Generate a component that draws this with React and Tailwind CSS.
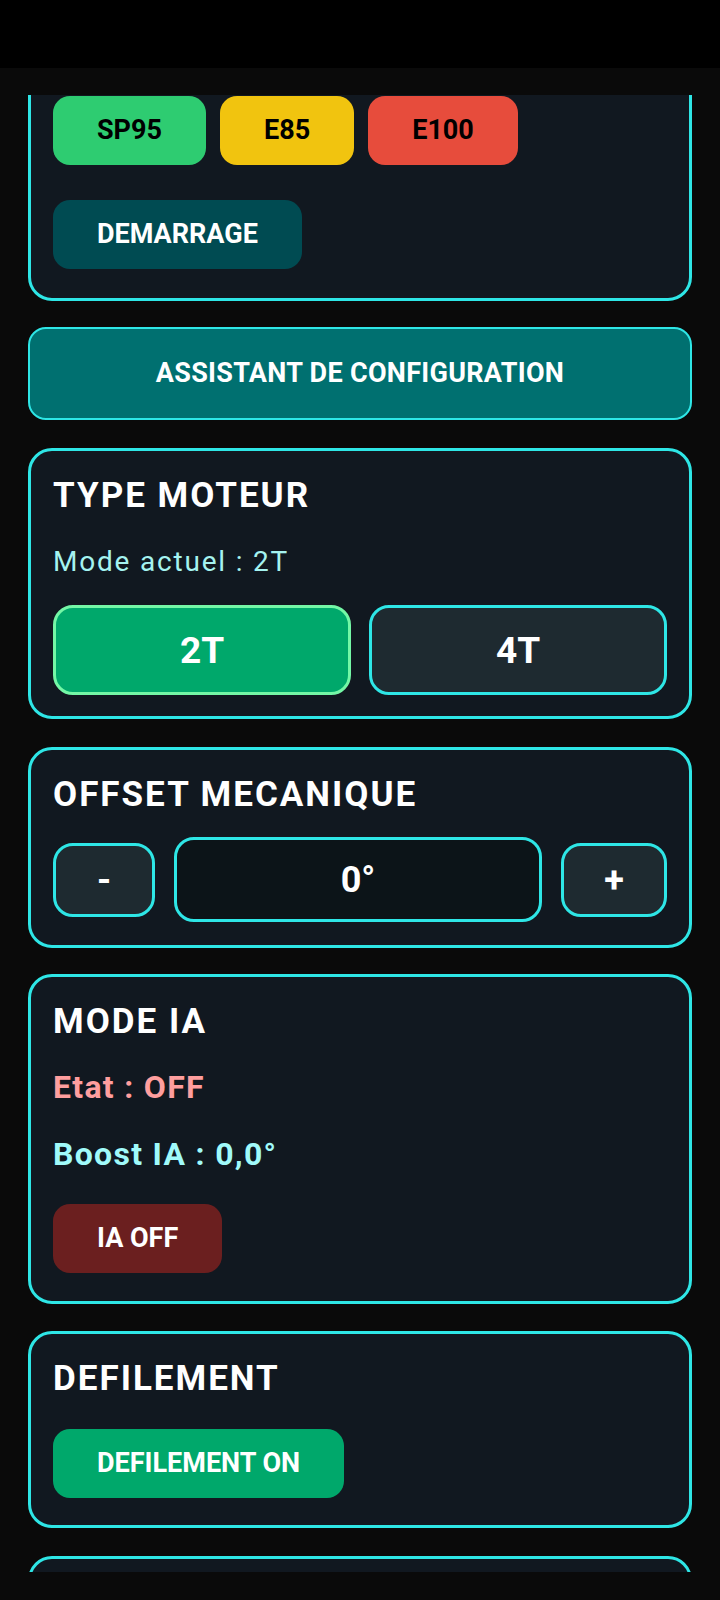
import React from "react";

const card = "rounded-[24px] border-[3px] border-[#2ee6e6] bg-[#111820]";
const smallBtn = "h-[69px] rounded-[17px] px-[44px] text-[27px] font-bold leading-none";

function Title({ children }) {
  return <h2 className="text-[35px] font-bold leading-none tracking-[2px] text-white">{children}</h2>;
}

export default function App() {
  return (
    <div className="flex h-[1600px] w-[720px] flex-col overflow-hidden bg-[#0a0a0a] font-['Roboto','Noto_Sans',sans-serif]">
      <div className="h-[68px] shrink-0 bg-black" />
      <div className="mt-[27px] h-[1477px] shrink-0 overflow-hidden">
        <div className="flex flex-col px-[28px]">
          {/* carburant (scrolled) */}
          <section className={`${card} -mt-[30px] px-[22px] pb-[29px] pt-[28px]`}>
            <div className="flex gap-[14px]">
              <button className={`${smallBtn} bg-[#2ecc71] text-black`}>SP95</button>
              <button className={`${smallBtn} bg-[#f1c40f] text-black`}>E85</button>
              <button className={`${smallBtn} bg-[#e74c3c] text-black`}>E100</button>
            </div>
            <button className={`${smallBtn} mt-[35px] bg-[#004b52] text-white`}>DEMARRAGE</button>
          </section>

          <button className="mt-[26px] h-[93px] rounded-[18px] border-2 border-[#2ee6e6] bg-[#007070] text-[27px] font-bold leading-none tracking-[0.3px] text-white">
            ASSISTANT DE CONFIGURATION
          </button>

          <section className={`${card} mt-[28px] px-[22px] pb-[21px] pt-[27px]`}>
            <Title>TYPE MOTEUR</Title>
            <p className="mt-[35px] text-[28px] leading-none tracking-[1.8px] text-[#a5f3f0]">Mode actuel : 2T</p>
            <div className="mt-[29px] grid grid-cols-2 gap-[18px]">
              <button className="h-[90px] rounded-[20px] border-[3px] border-[#74f7a6] bg-[#00a86b] text-[37px] font-bold leading-none text-white">
                2T
              </button>
              <button className="h-[90px] rounded-[20px] border-[3px] border-[#2ee6e6] bg-[#1e2a30] text-[37px] font-bold leading-none text-white">
                4T
              </button>
            </div>
          </section>

          <section className={`${card} mt-[28px] px-[22px] pb-[23px] pt-[27px]`}>
            <Title>OFFSET MECANIQUE</Title>
            <div className="mt-[25px] flex items-center gap-[19px]">
              <button className="h-[74px] w-[102px] shrink-0 rounded-[20px] border-[3px] border-[#2ee6e6] bg-[#1e2a30] text-[36px] font-bold leading-none text-white">
                -
              </button>
              <div className="flex h-[85px] flex-1 items-center justify-center rounded-[20px] border-[3px] border-[#2ee6e6] bg-[#0c1418] text-[36px] font-bold leading-none text-white">
                0°
              </div>
              <button className="h-[74px] w-[106px] shrink-0 rounded-[20px] border-[3px] border-[#2ee6e6] bg-[#1e2a30] text-[36px] font-bold leading-none text-white">
                +
              </button>
            </div>
          </section>

          <section className={`${card} mt-[26px] px-[22px] pb-[28px] pt-[27px]`}>
            <Title>MODE IA</Title>
            <p className="mt-[32px] text-[32px] font-bold leading-none tracking-[1.3px] text-[#ff9e9e]">Etat : OFF</p>
            <p className="mt-[35px] text-[32px] font-bold leading-none tracking-[1.3px] text-[#a0fafa]">Boost IA : 0,0°</p>
            <button className={`${smallBtn} mt-[34px] bg-[#6b1f1f] text-white`}>IA OFF</button>
          </section>

          <section className={`${card} mt-[27px] px-[22px] pb-[27px] pt-[27px]`}>
            <Title>DEFILEMENT</Title>
            <button className={`${smallBtn} mt-[33px] bg-[#00a86b] text-white`}>DEFILEMENT ON</button>
          </section>

          <section className={`${card} mt-[28px] h-[200px]`} />
        </div>
      </div>
    </div>
  );
}
